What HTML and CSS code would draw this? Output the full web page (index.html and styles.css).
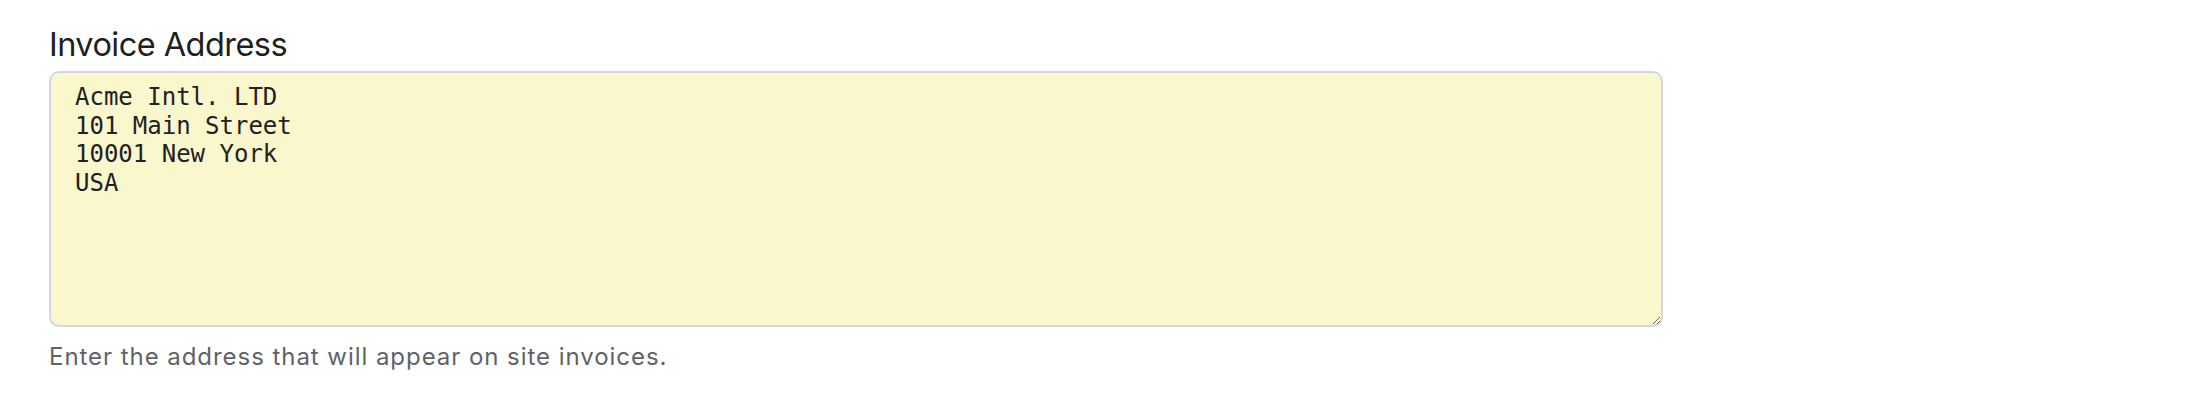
FILE: index.html
```html
<!DOCTYPE html>
<html lang="en">
<head>
<meta charset="utf-8">
<title>Invoice Address</title>
<link rel="stylesheet" href="styles.css">
</head>
<body>
<div class="field">
  <label class="field-label" for="invoice-address">Invoice Address</label>
  <textarea id="invoice-address" class="field-input" spellcheck="false">Acme Intl. LTD
101 Main Street
10001 New York
USA</textarea>
  <p class="field-help">Enter the address that will appear on site invoices.</p>
</div>
</body>
</html>
```

FILE: styles.css
```css
html, body {
  margin: 0;
  background: #ffffff;
}
body {
  padding: 25px 0 0 49px;
}
.field {
  display: flex;
  flex-direction: column;
  width: 1614px;
}
.field-label {
  font-family: "Inter", "Open Sans", sans-serif;
  font-size: 32.5px;
  line-height: 40px;
  letter-spacing: -0.55px;
  color: #1f1f1f;
  margin-bottom: 6px;
}
.field-input {
  box-sizing: border-box;
  width: 1614px;
  height: 256px;
  margin: 0;
  padding: 10px 24px;
  border: 2px solid #d3d6de;
  border-radius: 10px;
  background: #faf7cd;
  color: #202124;
  font-family: "DejaVu Sans Mono", monospace;
  font-size: 24px;
  line-height: 28.5px;
  outline: none;
}
.field-help {
  margin: 14px 0 0;
  font-family: "Inter", "Open Sans", sans-serif;
  font-size: 24px;
  line-height: 32px;
  letter-spacing: 0.95px;
  color: #5f6368;
}
```
